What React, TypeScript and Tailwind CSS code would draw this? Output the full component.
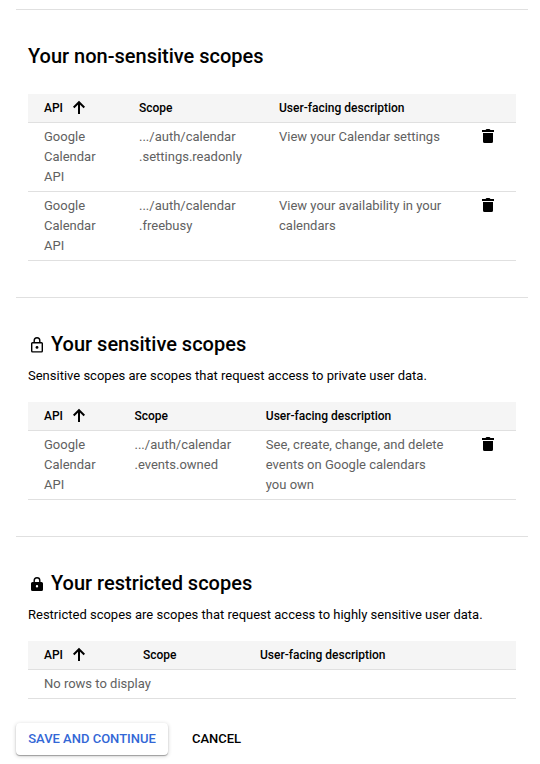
import React from "react";

function ArrowUp() {
  return (
    <svg viewBox="0 0 18 18" className="ml-[7px] h-[18px] w-[18px] shrink-0 fill-none stroke-black stroke-2">
      <path d="M9 15V3.2M3.7 8.5L9 3.2l5.3 5.3" />
    </svg>
  );
}

function Trash() {
  return (
    <svg viewBox="0 0 18 18" className="h-[18px] w-[18px] fill-black">
      <path d="M3 3h3.5l1-1h3l1 1H15v2H3zM4 6h10v8.5a1.5 1.5 0 0 1-1.5 1.5h-7A1.5 1.5 0 0 1 4 14.500z" />
    </svg>
  );
}

function Lock({ filled = false }: { filled?: boolean }) {
  return (
    <svg viewBox="0 0 18 18" className="mr-[5px] mt-[2px] h-[18px] w-[18px] fill-none stroke-black">
      {filled ? (
        <>
          <path d="M6.200 8V5.500a2.800 2.800 0 0 1 5.600 0V8" strokeWidth="1.4" />
          <path fillRule="evenodd" stroke="none" className="fill-black" d="M4.500 7h9A1.500 1.500 0 0 1 15 8.500v6a1.500 1.500 0 0 1-1.500 1.500h-9A1.500 1.500 0 0 1 3 14.500v-6A1.500 1.500 0 0 1 4.500 7zM9 10.100a1.200 1.200 0 1 0 0 2.400a1.200 1.200 0 0 0 0-2.400z" />
        </>
      ) : (
        <>
          <path d="M6.200 7V4.600a2.800 2.800 0 0 1 5.600 0V7" strokeWidth="1.4" />
          <rect x="3.700" y="6.700" width="10.600" height="9.200" rx="0.800" strokeWidth="1.4" />
          <circle cx="9" cy="11.400" r="1.400" stroke="none" className="fill-black" />
        </>
      )}
    </svg>
  );
}

type Row = { scope: string[]; description: string[] };

function ScopeTable({ rows, columns }: { rows: Row[]; columns: string }) {
  return (
    <div className="mx-3">
      <div className={`grid ${columns} h-[29px] items-center border-b border-[#e0e0e0] bg-[#f5f5f5] pl-4 text-xs font-medium text-black`}>
        <div className="flex items-center">API<ArrowUp /></div>
        <div>Scope</div>
        <div>User-facing description</div>
      </div>
      {rows.map((row) => (
        <div key={row.scope.join("")} className={`grid ${columns} h-[69px] border-b border-[#e0e0e0] pl-4 pt-1 text-[13px] leading-5 text-[#616161]`}>
          <div>Google<br />Calendar<br />API</div>
          <div>{row.scope.map((s) => <div key={s}>{s}</div>)}</div>
          <div>{row.description.map((s) => <div key={s}>{s}</div>)}</div>
          <div><Trash /></div>
        </div>
      ))}
      {rows.length === 0 && (
        <div className="h-[29px] border-b border-[#e0e0e0] pl-4 pt-1 text-[13px] leading-5 text-[#616161]">No rows to display</div>
      )}
    </div>
  );
}

export default function App() {
  return (
    <main className="h-[764px] overflow-hidden bg-white px-4 pr-3 pt-[9px] font-[Roboto,sans-serif] text-black">
      <section className="h-[288px] border-t border-[#e0e0e0]">
        <h2 className="ml-3 h-[84px] pt-[34px] text-xl leading-6 font-medium">Your non-sensitive scopes</h2>
        <ScopeTable
          columns="grid-cols-[95px_140px_200px_1fr]"
          rows={[
            { scope: [".../auth/calendar", ".settings.readonly"], description: ["View your Calendar settings"] },
            { scope: [".../auth/calendar", ".freebusy"], description: ["View your availability in your", "calendars"] },
          ]}
        />
      </section>
      <section className="h-[239px] border-t border-[#e0e0e0]">
        <h2 className="ml-3 flex h-[58px] items-center pt-[34px] text-xl leading-6 font-medium"><Lock />Your sensitive scopes</h2>
        <p className="ml-3 h-[46px] pt-[10px] text-[13px] leading-5">Sensitive scopes are scopes that request access to private user data.</p>
        <ScopeTable
          columns="grid-cols-[90.5px_131.3px_213.2px_1fr]"
          rows={[{ scope: [".../auth/calendar", ".events.owned"], description: ["See, create, change, and delete", "events on Google calendars", "you own"] }]}
        />
      </section>
      <section className="h-[187px] border-t border-[#e0e0e0]">
        <h2 className="ml-3 flex h-[58px] items-center pt-[34px] text-xl leading-6 font-medium"><Lock filled />Your restricted scopes</h2>
        <p className="ml-3 h-[46px] pt-[10px] text-[13px] leading-5">Restricted scopes are scopes that request access to highly sensitive user data.</p>
        <ScopeTable columns="grid-cols-[99px_117px_1fr]" rows={[]} />
      </section>
      <div className="flex h-8 text-[13px] font-medium">
        <button className="h-8 w-[152px] rounded bg-white text-[#3367d6] shadow-[0_1px_1px_rgba(0,0,0,0.3),0_1px_4px_rgba(0,0,0,0.2)]">SAVE AND CONTINUE</button>
        <button className="ml-3 h-8 w-[73px]">CANCEL</button>
      </div>
    </main>
  );
}
